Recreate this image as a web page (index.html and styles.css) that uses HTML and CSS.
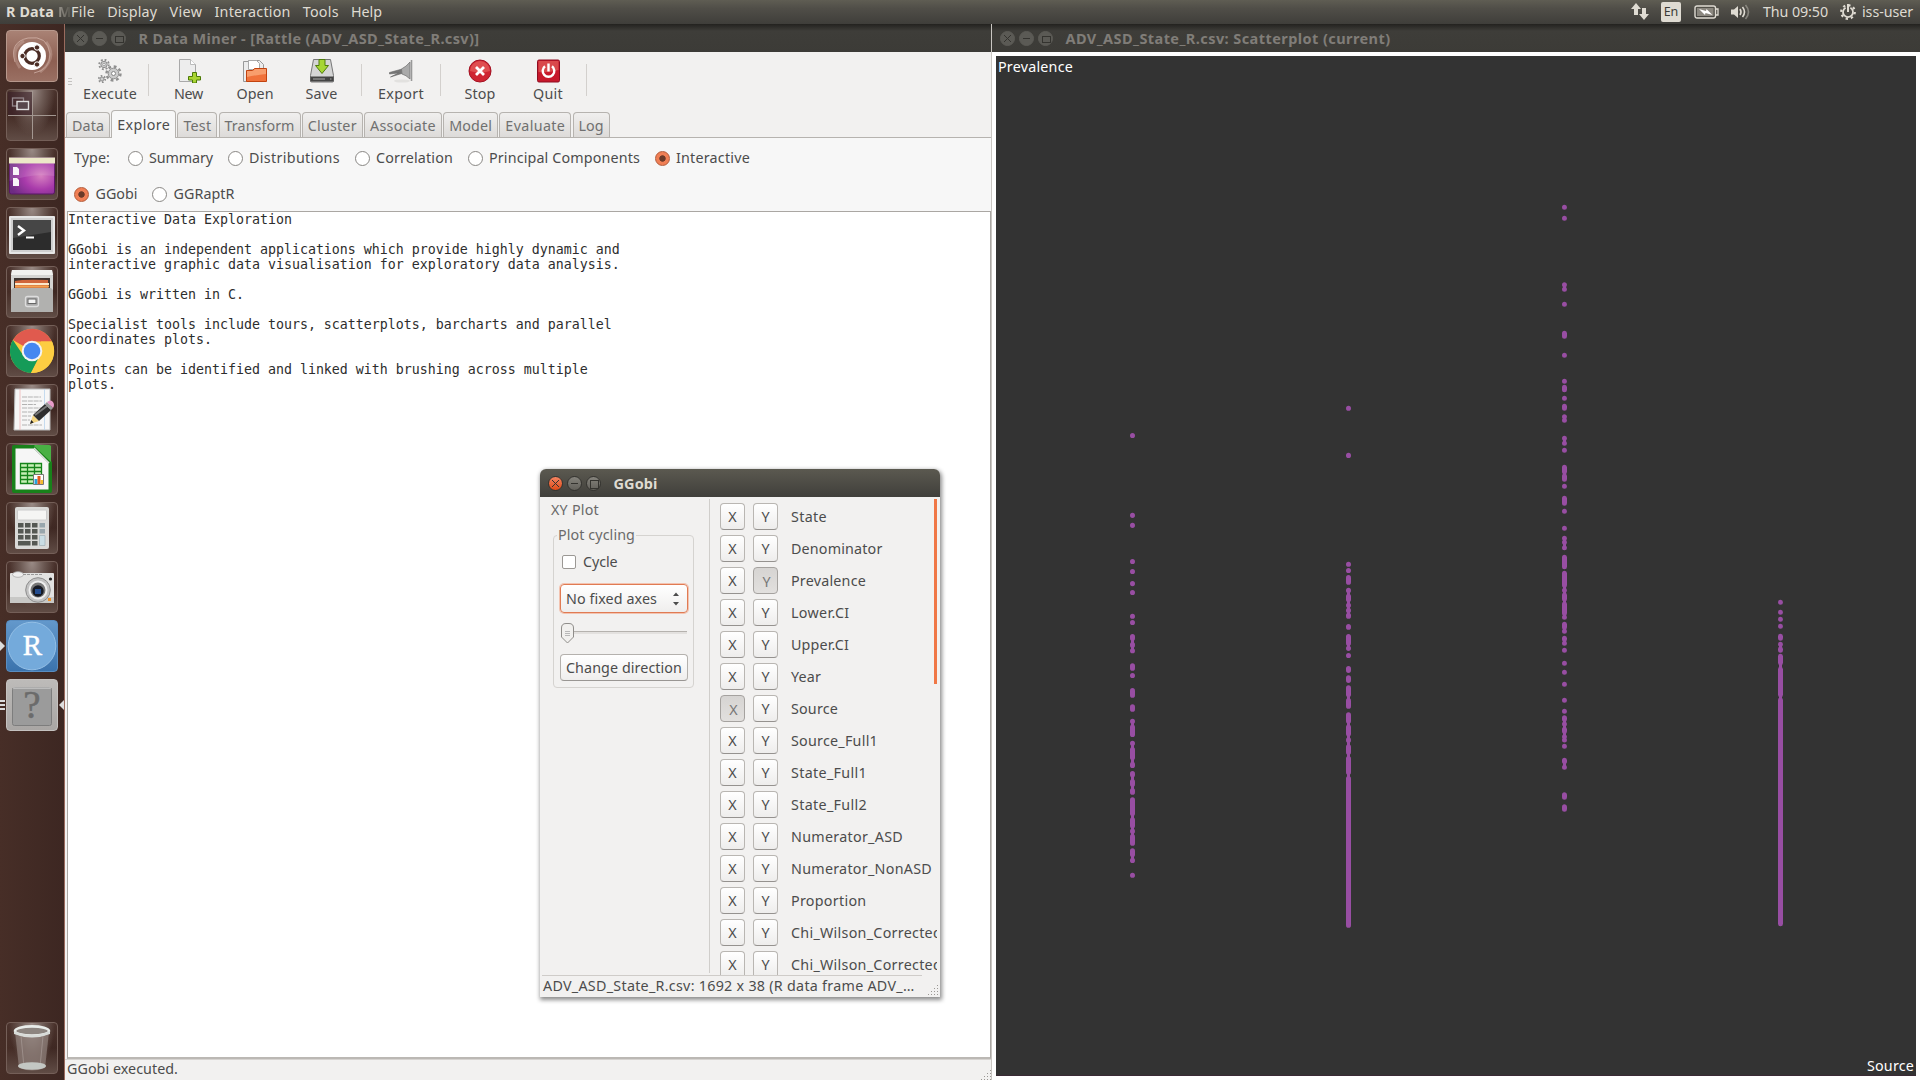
FILE: index.html
```html
<!DOCTYPE html>
<html lang="en">
<head>
<meta charset="utf-8">
<title>R Data Miner</title>
<link rel="stylesheet" href="styles.css">
</head>
<body>
<header class="panel">
  <span class="app-name"><b data-w="48">R Data</b><i>M</i></span>
  <nav class="menu"><span data-w="24">File</span><span data-w="50">Display</span><span data-w="33">View</span><span data-w="76">Interaction</span><span data-w="36">Tools</span><span data-w="31">Help</span></nav>
  <div class="tray">
    <svg class="t-net" width="20" height="18" viewBox="0 0 20 18"><path fill="#dfdbd2" d="M6 0l5 6H8v6H4V6H1zM14 17l-5-6h3V5h4v6h3z"/></svg>
    <span class="lang">En</span>
    <svg class="t-bat" width="25" height="14" viewBox="0 0 25 14"><rect x="1" y="1" width="20.500" height="12" rx="2" fill="none" stroke="#dfdbd2" stroke-width="1.400"/><rect x="3" y="3" width="16.500" height="8" fill="#8b877f"/><path d="M22 4h2v6h-2" fill="none" stroke="#dfdbd2" stroke-width="1.300"/><path fill="#fff" d="M5 4l7 2 .5-2 6 6-7-2-.5 2z"/></svg>
    <svg class="t-vol" width="21" height="16" viewBox="0 0 21 16"><path fill="#dfdbd2" d="M1 5.500h3L8 2v12l-4-3.500H1z"/><g fill="none" stroke="#dfdbd2" stroke-width="1.600"><path d="M10 5q2 3 0 6"/><path d="M12.500 3q4 5 0 10"/><path d="M15.500 1q6 7 0 14" opacity=".4"/></g></svg>
    <span class="clock" data-w="65">Thu 09:50</span>
    <svg class="t-gear" width="16" height="16" viewBox="0 0 16 16"><g fill="none" stroke="#dfdbd2"><circle cx="8" cy="8" r="6.800" stroke-width="2.200" stroke-dasharray="2.300 3.040" /><path d="M5.600 3.700a5 5 0 1 0 4.800 0" stroke-width="1.800"/><path d="M8 0v8" stroke-width="2"/></g></svg>
    <span class="user" data-w="51">iss-user</span>
  </div>
</header>

<div class="workspace">
<aside class="launcher">
  <div class="tile dash"><svg viewBox="0 0 52 52"><g fill="none" stroke="#e9cfc6" opacity=".55"><path d="M9 32Q3 12 22 8Q42 5 44 24Q44 40 28 43"/><path d="M14 38Q2 20 18 11" stroke-width="3" opacity=".5"/><path d="M40 12Q52 28 34 42" stroke-width="3" opacity=".5"/></g><circle cx="26" cy="26" r="14" fill="#fff"/><circle cx="26" cy="26" r="7.300" fill="none" stroke="#4a2c24" stroke-width="3.200"/><g fill="#4a2c24" stroke="#fff"><circle cx="16.500" cy="26" r="2.700"/><circle cx="31" cy="17.500" r="2.700"/><circle cx="31" cy="34.500" r="2.700"/></g></svg></div>
  <div class="tile"><svg viewBox="0 0 52 52"><rect x="2" y="3" width="24" height="23" fill="#3a2028" opacity=".6"/><path d="M26.500 2v48M2 26.500h48" stroke="#a39791"/><rect x="6.500" y="9" width="11" height="8" fill="none" stroke="#92868a" stroke-width="1.300"/><rect x="11" y="12.500" width="11.500" height="8" fill="#57474c" stroke="#ddd" stroke-width="1.400"/></svg></div>
  <div class="tile"><svg viewBox="0 0 52 52"><defs><radialGradient id="pu" cx=".7" cy=".5" r=".75"><stop offset="0" stop-color="#d67fc0"/><stop offset=".5" stop-color="#a93bab"/><stop offset="1" stop-color="#6d2b83"/></radialGradient></defs><rect x="3.500" y="10" width="45" height="36" rx="2" fill="url(#pu)" stroke="#5b1669"/><path d="M3 9.500h46v6H3z" fill="#ece8c8"/><path d="M3.500 15.500h45V28Q26 25 3.500 33z" fill="#fff" opacity=".12"/><path d="M7 19h4l2 2v6H7zM7 30h4l2 2v6H7z" fill="#f8f4f8"/></svg></div>
  <div class="tile"><svg viewBox="0 0 52 52"><rect x="3" y="9" width="46" height="38" rx="1" fill="#e6e6e6"/><rect x="5" y="11" width="42" height="34" fill="#cfcfcf"/><rect x="7" y="13" width="38" height="30" fill="#2c2c2c"/><path d="M7 13h38v12L7 31z" fill="#464646"/><path d="M12 19l6 4.500-6 4.500" fill="none" stroke="#fff" stroke-width="2.400"/><path d="M20 30.500h8" stroke="#fff" stroke-width="2"/></svg></div>
  <div class="tile"><svg viewBox="0 0 52 52"><path d="M6 4h40l1 6v36H5V10z" fill="#d4d4d2"/><path d="M6 4h40l1 5H5z" fill="#f1f1ef"/><path d="M8 12h36v12H8z" fill="#3c3330"/><path d="M9 15q8-2 33-1v9H9z" fill="#d0653a"/><path d="M9 18h34" stroke="#fbe8cb" stroke-width="2"/><path d="M9 20.500h34" stroke="#f2a14e" stroke-width="2"/><path d="M7 22h38l2 2v22H5V24z" fill="#b1b1af"/><rect x="19.500" y="30.500" width="13" height="10" rx="2" fill="#aaa" stroke="#ddd" stroke-width="1.300"/><rect x="22" y="33" width="8" height="4.500" fill="#f4f4f4" stroke="#666"/></svg></div>
  <div class="tile"><svg viewBox="0 0 52 52"><circle cx="26" cy="26" r="22" fill="#fbc93d"/><path d="M26 26L6.900 15A22 22 0 0 1 46 16.500H26z" fill="#e05a4e"/><path d="M6.900 15A22 22 0 0 0 25 48l9.500-17L26 26 17 30z" fill="#159b58"/><path d="M25 48l9-18 1-13.500h11A22 22 0 0 1 25 48z" fill="#fdcd42"/><circle cx="26" cy="26" r="10.300" fill="#f3f3f3"/><circle cx="26" cy="26" r="8.300" fill="#4587f0"/></svg></div>
  <div class="tile"><svg viewBox="0 0 52 52"><path d="M9 5h35v41H8z" fill="#f6f6f6" stroke="#b9b9b9"/><path d="M14 5v41" stroke="#f0b6b6" stroke-width=".8"/><path d="M38.500 5v41" stroke="#b9d4ee" stroke-width=".8"/><path d="M16 13h19M16 17h20M16 20.500h14M16 24h20M16 28h17M16 32h9M16 36h8M16 41h20" stroke="#b2b2b2" stroke-dasharray="5 .8"/><path d="M24 40l3-9 6 6z" fill="#f3d480"/><path d="M27 31l12-11 6 6-12 11z" fill="#2e2e2e"/><path d="M29 31l12-9" stroke="#777" stroke-width="2"/><path d="M39 20l2-2 6 6-2 2z" fill="#999"/><path d="M41 18q4-3 6 0t0 6z" fill="#e69bc8"/><path d="M24 40l1.200-4 2.500 2.500z" fill="#222"/></svg></div>
  <div class="tile"><svg viewBox="0 0 52 52"><path d="M8 2h21l17 17v29q0 2-2 2H8q-2 0-2-2V4q0-2 2-2z" fill="#18811a"/><path d="M9.500 5.500h18L42.500 20v26.500h-33z" fill="#f6f6f6"/><path d="M28 3l17 16V3q-1-1-2-1H29z" fill="#49b044"/><path d="M28 5l15 15" stroke="#ddd" stroke-width="1.600"/><g fill="#c6efb5" stroke="#15841a" stroke-width="1.300"><path d="M14.500 20.500h21v20h-21z"/><path fill="none" d="M14.500 24.500h21M14.500 28.500h21M14.500 32.500h21M14.500 36.500h21M21.500 20.500v20M28.500 20.500v20"/></g><path d="M27.500 31.500h10v10h-10z" fill="#fff" stroke="#777"/><path d="M28.500 36h3v5h-3z" fill="#27a3dd"/><path d="M31.500 33h3v8h-3z" fill="#e35a1d"/><path d="M34.500 37h2.500v4h-2.500z" fill="#f3bc2c"/></svg></div>
  <div class="tile"><svg viewBox="0 0 52 52"><rect x="9" y="5" width="34" height="42" rx="2" fill="#d9d9d7"/><rect x="11.500" y="8" width="29" height="10" rx="1" fill="#f5f5f4" stroke="#ccc"/><g fill="#555853"><path d="M12 21h5.500v4.500H12zM19 21h5.500v4.500H19zM26 21h5.500v4.500H26zM12 27h5.500v4.500H12zM19 27h5.500v4.500H19zM26 27h5.500v4.500H26zM12 33h5.500v4.500H12zM19 33h5.500v4.500H19zM26 33h5.500v4.500H26zM12 39h12.500v4.500H12zM26 39h5.500v4.500H26z"/></g><path d="M33.500 21H39v4.500h-5.500zM33.500 27H39v4.500h-5.500z" fill="#98a6ac"/><path d="M33.500 33.500H39v10h-5.500z" fill="#c9dde4" stroke="#a4b4ba" stroke-width=".8"/></svg></div>
  <div class="tile"><svg viewBox="0 0 52 52"><path d="M5 12h42q1 0 1 1v28q0 1-1 1H5q-1 0-1-1V13q0-1 1-1z" fill="#e2e2e1"/><path d="M4 36h44v6H4z" fill="#c8c8c6"/><ellipse cx="12" cy="13.500" rx="5.500" ry="2.800" fill="#eee" stroke="#aaa" stroke-width=".8"/><path d="M17 13.500h19" stroke="#999" stroke-dasharray="3 1"/><circle cx="32" cy="29" r="12.300" fill="#c2c2c2" stroke="#8d8d8d"/><circle cx="32" cy="29" r="9.500" fill="#eee"/><circle cx="32" cy="29" r="7.500" fill="#777"/><circle cx="32" cy="30" r="5.700" fill="#161a24"/><path d="M29 28h6v5h-6z" fill="#234c8f"/><circle cx="44.500" cy="18" r="1.600" fill="#222"/><path d="M42 37h3v3h-3z" fill="#ef9128"/></svg></div>
  <div class="tile rstudio"><i class="mark left"></i><svg viewBox="0 0 52 52"><circle cx="26" cy="26" r="23.800" fill="#74aadb" stroke="#93bfe6"/><text x="26.500" y="34.500" text-anchor="middle">R</text></svg></div>
  <div class="tile unknown"><i class="bars"></i><svg viewBox="0 0 52 52"><rect x="6.500" y="8.500" width="39" height="38" rx="2" fill="#9b9b9b" stroke="#7d7d7d"/><path d="M7 9h38" stroke="#ddd"/><text x="26" y="39" text-anchor="middle">?</text></svg><i class="mark right"></i></div>
  <div class="tile trash"><svg viewBox="0 0 52 52"><path d="M9 10l4 36q13 5 26 0l4-36z" fill="#9b8d88" opacity=".6"/><path d="M15 14l3 31M37 14l-3 31" stroke="#b5aaa6" opacity=".5"/><ellipse cx="26" cy="44" rx="14" ry="3.800" fill="#c3c7c3"/><ellipse cx="26" cy="9" rx="17" ry="4.600" fill="#8d8580" stroke="#e9ece9" stroke-width="2.600"/><path d="M8 9v3q18 7 36 0V9q-18 8-36 0z" fill="#d8dbd8"/></svg></div>
</aside>

<main class="rattle">
  <div class="titlebar inactive"><span class="wb x"></span><span class="wb m"></span><span class="wb r"></span><b data-w="341">R Data Miner - [Rattle (ADV_ASD_State_R.csv)]</b></div>
  <div class="toolbar">
    <i class="handle"></i>
    <div class="tool w-exe"><svg viewBox="0 0 24 24"><g fill="none" stroke="#8f8f8f"><circle cx="6" cy="5.500" r="4.800" stroke-dasharray="1.900 1.870" stroke-width="1.800"/><circle cx="6" cy="5.500" r="3.200" fill="#c9c9c9"/><circle cx="15.500" cy="14.500" r="7" stroke-width="2.400" stroke-dasharray="2.800 2.700"/><circle cx="15.500" cy="14.500" r="5.300" fill="#cbcbcb"/><circle cx="4" cy="20" r="3.200" stroke-dasharray="1.600 1.750" stroke-width="1.800"/><circle cx="4" cy="20" r="2" fill="#ccc"/></g><circle cx="6" cy="5.500" r="1.200" fill="#fff" stroke="#888" stroke-width=".7"/><circle cx="15.500" cy="14.500" r="2" fill="#fff" stroke="#888"/></svg><span data-w="54">Execute</span></div>
    <i class="sep"></i>
    <div class="tool w-new"><svg viewBox="0 0 24 24"><path d="M2.500.5h11l5 5v17h-16z" fill="#ededed" stroke="#a9a9a9"/><path d="M13.500.5v5h5" fill="#fff" stroke="#bbb"/><path d="M15.500 13.500h4v4h4v3.500h-4v3h-4v-3h-4v-3.500h4z" fill="#a9d532" stroke="#4d7a07"/></svg><span data-w="29">New</span></div>
    <div class="tool w-open"><svg viewBox="0 0 24 24"><path d="M.5 2.500h5v-1h11l4 4v17H.5z" fill="#ececec" stroke="#999"/><path d="M5.500 1.500h8l3 3v6h-11z" fill="#fff" stroke="#aaa"/><path d="M3.500 11.500h6l2-2h12v13h-20z" fill="#f0723b" stroke="#c2430f"/><path d="M4 12h6l2-2h11v5q-9 1-19 3z" fill="#fbb083" opacity=".7"/></svg><span data-w="37">Open</span></div>
    <div class="tool w-save"><svg viewBox="0 0 24 24"><path d="M3.500.5h17l3 16v5.500q0 1-1 1h-21q-1 0-1-1v-5.500z" fill="#d5d5d5" stroke="#777"/><path d="M.5 17.500h23v5H.5z" fill="#444"/><path d="M3 20h12M20 20h1.500" stroke="#aaa"/><path d="M9 .5h6v6h3.500L12 14.500 5.500 6.500H9z" fill="#a6d634" stroke="#4e7c0a"/></svg><span data-w="32">Save</span></div>
    <i class="sep"></i>
    <div class="tool w-export"><svg viewBox="0 0 24 24"><ellipse cx="13" cy="22" rx="8" ry="1.600" fill="#e2e1df"/><path d="M.5 13.500l9-2.500 3.500-1 2.500 4-4.500 1-9.500 3 8-4-9 1z" fill="#777" stroke="#666" stroke-width=".6"/><path d="M12.500 10q5-2.500 8.500-7v17q-4-4-8-5z" fill="#aaa" stroke="#777" stroke-width=".8"/><path d="M22.500 1v21" stroke="#999" stroke-width="1.600"/></svg><span data-w="46">Export</span></div>
    <i class="sep"></i>
    <div class="tool w-stop"><svg viewBox="0 0 24 24"><circle cx="12" cy="12" r="11" fill="#cf2532" stroke="#a41223"/><path d="M2 12a10 10 0 0 1 20 0q-10 3-20 0z" fill="#ea6a64" opacity=".6"/><path d="M8 8l8 8m0-8l-8 8" stroke="#fff" stroke-width="2.800"/></svg><span data-w="31">Stop</span></div>
    <div class="tool w-quit"><svg viewBox="0 0 24 24"><rect x="1.500" y="1" width="22" height="22" rx="1.500" fill="#c7182b" stroke="#8f0c20"/><path d="M2.500 2h20v9q-10 3-20 2z" fill="#e56a62" opacity=".6"/><path d="M9 7.300a5.800 5.800 0 1 0 7 0" fill="none" stroke="#fff" stroke-width="2.400"/><path d="M12.500 4.500v8" stroke="#fff" stroke-width="2.400"/></svg><span data-w="30">Quit</span></div>
    <i class="sep"></i>
  </div>
  <div class="tabs"><span><em data-w="32">Data</em></span><span class="on"><em data-w="53">Explore</em></span><span><em data-w="28">Test</em></span><span><em data-w="70">Transform</em></span><span><em data-w="49">Cluster</em></span><span><em data-w="66">Associate</em></span><span><em data-w="43">Model</em></span><span><em data-w="60">Evaluate</em></span><span><em data-w="25">Log</em></span></div>
  <div class="options">
    <div class="row"><span class="type" data-w="36">Type:</span><label><i></i><span data-w="64">Summary</span></label><label><i></i><span data-w="91">Distributions</span></label><label><i></i><span data-w="77">Correlation</span></label><label><i></i><span data-w="151">Principal Components</span></label><label class="on"><i></i><span data-w="74">Interactive</span></label></div>
    <div class="row engine"><label class="on"><i></i><span data-w="42">GGobi</span></label><label><i></i><span data-w="61">GGRaptR</span></label></div>
  </div>
<pre class="textview">Interactive Data Exploration

GGobi is an independent applications which provide highly dynamic and
interactive graphic data visualisation for exploratory data analysis.

GGobi is written in C.

Specialist tools include tours, scatterplots, barcharts and parallel
coordinates plots.

Points can be identified and linked with brushing across multiple
plots.</pre>
  <div class="status"><span data-w="111">GGobi executed.</span><i class="grip"></i></div>
</main>

<section class="scatter">
  <div class="titlebar inactive"><span class="wb x"></span><span class="wb m"></span><span class="wb r"></span><b data-w="325">ADV_ASD_State_R.csv: Scatterplot (current)</b></div>
  <div class="plot">
    <span class="ylab" data-w="75">Prevalence</span>
    <svg class="points" viewBox="996 56 920 1020">
      <g transform="translate(1132.500 400) scale(.33333 .34438)"><path class="d" d="M0 103v0M0 335v0M0 364v0M0 469v0M0 498v0M0 533v0M0 559v0M0 628v0M0 646v0M0 687V692M0 710V712M0 728v0M0 772V779M0 800v0M0 844V857M0 891V898M0 933v0M0 950V971M0 997v0M0 1015V1038M0 1058V1061M0 1085V1088M0 1108V1116M0 1134V1139M0 1161V1201M0 1219V1236M0 1252v0M0 1268V1287M0 1309V1320M0 1337v0M0 1380v0"/><path class="n" d="M0 687V728M0 933V971M0 997V1061M0 1085V1139M0 1161V1287M0 1309V1337"/></g>
      <g transform="translate(1348.500 400) scale(.33333 .34438)"><path class="d" d="M0 24v0M0 161v0M0 477v0M0 495v0M0 516V529M0 553v0M0 570V579M0 596v0M0 611v0M0 625V628M0 658V660M0 687V706M0 721v0M0 742v0M0 780V785M0 807V814M0 836V855M0 873V889M0 914V932M0 950V969M0 987V988M0 1007V1023M0 1041V1081M0 1099V1525"/><path class="n" d="M0 553V628M0 687V721M0 836V889M0 914V1500"/></g>
      <g transform="translate(1564.500 190) scale(.33333)"><path class="d" d="M0 52v0M0 85v0M0 284v0M0 298v0M0 343v0M0 430V439M0 496v0M0 574v0M0 592V599M0 625v0M0 649V655M0 680v0M0 691v0M0 745v0M0 760v0M0 781v0M0 832V845M0 858V868M0 889v0M0 925V940M0 964v0"/><path class="n" d="M0 284V298M0 680V691M0 745V760M0 832V868"/></g>
      <g transform="translate(1564.500 500) scale(.33333)"><path class="d" d="M0 85v0M0 115v0M0 127v0M0 143v0M0 172V200M0 220V256M0 271v0M0 285V297M0 312V340M0 352v0M0 373V382M0 394v0M0 415V418M0 430v0M0 451v0M0 490v0M0 517v0M0 553v0M0 601v0M0 634v0M0 653V658M0 672v0M0 688V694M0 710v0M0 720v0M0 739v0M0 781V785M0 802v0M0 884V892M0 920V928"/><path class="n" d="M0 115V143M0 220V352M0 373V394M0 415V430M0 653V720M0 783V802"/></g>
      <g transform="translate(1780.500 580) scale(.33333)"><path class="d" d="M0 67v0M0 97v0M0 118v0M0 139v0M0 169V175M0 193v0M0 207V211M0 229V248M0 268V344M0 360V1031"/><path class="n" d="M0 193V211M0 229V400"/></g>
    </svg>
    <span class="xlab" data-w="47">Source</span>
  </div>
</section>
</div>

<div class="ggobi">
  <div class="titlebar"><span class="wb x"></span><span class="wb m"></span><span class="wb r"></span><b data-w="44">GGobi</b></div>
  <div class="gbody">
    <div class="gleft">
      <span class="mode" data-w="48">XY Plot</span>
      <div class="frame">
        <span class="legend"><em data-w="77">Plot cycling</em></span>
        <label class="check"><i></i><span data-w="34.500">Cycle</span></label>
        <div class="combo"><span data-w="91">No fixed axes</span><svg width="8" height="14" viewBox="0 0 8 14"><path d="M1 4l3-3.500L7 4zM1 10l3 3.500L7 10z" fill="#4c4c4c"/></svg></div>
        <div class="slider"><svg width="13" height="21" viewBox="0 0 13 21"><path d="M.5 5q0-4.500 4.500-4.500h3q4.500 0 4.500 4.500v9l-6 6-6-6z" fill="#f1f0ee" stroke="#8f8d8a"/><path d="M4 8.500h5M4 10.500h5M4 12.500h5" stroke="#aaa" stroke-width=".8"/></svg></div>
        <div class="gbtn"><span data-w="116">Change direction</span></div>
      </div>
    </div>
    <div class="vars">
      <div><button>X</button><button>Y</button><span data-w="36">State</span></div>
      <div><button>X</button><button>Y</button><span data-w="91.500">Denominator</span></div>
      <div><button>X</button><button class="down">Y</button><span data-w="75">Prevalence</span></div>
      <div><button>X</button><button>Y</button><span data-w="58.500">Lower.CI</span></div>
      <div><button>X</button><button>Y</button><span data-w="58">Upper.CI</span></div>
      <div><button>X</button><button>Y</button><span data-w="30">Year</span></div>
      <div><button class="down">X</button><button>Y</button><span data-w="47">Source</span></div>
      <div><button>X</button><button>Y</button><span data-w="87">Source_Full1</span></div>
      <div><button>X</button><button>Y</button><span data-w="76">State_Full1</span></div>
      <div><button>X</button><button>Y</button><span data-w="76">State_Full2</span></div>
      <div><button>X</button><button>Y</button><span data-w="112">Numerator_ASD</span></div>
      <div><button>X</button><button>Y</button><span data-w="141">Numerator_NonASD</span></div>
      <div><button>X</button><button>Y</button><span data-w="75.500">Proportion</span></div>
      <div><button>X</button><button>Y</button><span data-w="151">Chi_Wilson_Corrected</span></div>
      <div><button>X</button><button>Y</button><span data-w="151">Chi_Wilson_Corrected</span></div>
    </div>
    <i class="scroll"></i>
  </div>
  <div class="gstatus"><span data-w="371.500">ADV_ASD_State_R.csv: 1692 x 38 (R data frame ADV_…</span><i class="grip"></i></div>
</div>
<script src="labels.js"></script>
</body>
</html>
```
FILE: styles.css
```css
* { box-sizing: border-box; }
body { margin: 0; width: 1920px; height: 1080px; overflow: hidden; background: #3c3b37; font: 14.3px/18px "Noto Sans", "Open Sans", sans-serif; color: #4c4c4c; position: relative; }
i, em { font-style: normal; }
svg { display: block; }
[data-w] { display: block; flex: none; white-space: nowrap; }

.panel { height: 24px; display: flex; align-items: center; background: linear-gradient(#5f5d53, #504e48 35%, #3f3e3a); color: #dfdbd2; }
.app-name { width: 71px; padding-left: 6px; display: flex; gap: 4px; overflow: hidden; }
.app-name i { font-weight: bold; width: 13px; overflow: hidden; background: linear-gradient(90deg, #9a968e, #55534c); background-clip: text; color: transparent; }
.menu { display: flex; gap: 12.200px; flex: 1; }
.tray { display: flex; align-items: center; width: 290px; }
.lang { width: 20px; height: 20px; margin-left: 11px; border-radius: 2px; background: #dfdbd2; color: #3c3b37; font-size: 12.500px; line-height: 20px; text-align: center; }
.t-bat { margin-left: 13px; }
.t-vol { margin-left: 11px; }
.clock { margin-left: 12px; }
.t-gear { margin-left: 12px; }
.user { margin-left: 6px; }

.workspace { display: flex; height: 1056px; }
.launcher { width: 65px; padding: 6px 0 6px 6px; display: flex; flex-direction: column; gap: 7px; background: linear-gradient(90deg, #472e27, #3d2722); border-right: 1px solid #9a6b5e; }
.tile { flex: none; width: 52px; height: 52px; border-radius: 4px; position: relative; background: radial-gradient(ellipse at 50% 0, #9a8b86 0, #6a5751 35%, transparent 65%), linear-gradient(#4a322c, #40291f00 50%, #604c45); border: 1px solid #745f58; }
.tile svg { width: 52px; height: 52px; margin: -1px; }
.dash { background: linear-gradient(#a98275, #8d5f52 60%, #9a7063); border-color: #b7988c; }
.rstudio { background: linear-gradient(#6398cb, #3b73ad); border-color: #5a8dc0; }
.rstudio text { font: 29px "Liberation Serif", serif; fill: #fff; stroke: #fff; stroke-width: .4px; }
.unknown { background: linear-gradient(#bdbbb9, #a9a6a4); border-color: #c5c2c0; }
.unknown text { font: 39px "Liberation Serif", serif; fill: #6b6b6b; stroke: #6b6b6b; stroke-width: .5px; }
.trash { margin-top: auto; }
.mark { position: absolute; top: 20px; border: 5px solid transparent; }
.mark.left { left: -7px; border-left-color: #ddd; border-right: 0; }
.mark.right { right: -7px; border-right-color: #ddd; border-left: 0; }
.bars { position: absolute; left: -7px; top: 20px; width: 5px; height: 10px; background: repeating-linear-gradient(#ddd 0 2px, transparent 2px 4px); }

.titlebar { height: 28px; display: flex; align-items: center; gap: 4px; padding-left: 8px; background: linear-gradient(#5b5950, #403f3b); color: #dfdbd2; font-size: 14.500px; }
.titlebar b { margin-left: 8.500px; }
.titlebar.inactive { background: linear-gradient(#23221f, #3e3d39 25%, #3c3b37); color: #807d78; }
.wb { width: 15px; height: 15px; border-radius: 50%; background: linear-gradient(#85837c, #62605a); border: 1px solid #34332f; position: relative; }
.inactive .wb { background: #5b5a55; border-color: #5b5a55; }
.wb::after { content: ""; position: absolute; }
.m::after { left: 3px; top: 6px; width: 7px; height: 1px; background: #34332f; }
.r::after { left: 3px; top: 3px; width: 7px; height: 7px; border: 1px solid #34332f; }
.inactive .r::after { top: 4px; height: 5px; }
.x::after { left: 3px; top: 3px; width: 7px; height: 7px; background: linear-gradient(45deg, transparent 45%, #34332f 45% 56%, transparent 56%), linear-gradient(-45deg, transparent 45%, #34332f 45% 56%, transparent 56%); }

.rattle { width: 927px; display: flex; flex-direction: column; background: #f2f1f0; border-right: 1px solid #c9c6c2; }
.rattle .titlebar { flex: none; }
.toolbar { height: 58px; flex: none; display: flex; align-items: flex-start; padding: 6px 0 0 3px; }
.handle { width: 4px; height: 9px; margin-top: 20px; background: repeating-linear-gradient(#c4c2c0 0 1px, transparent 1px 3px); }
.tool { flex: none; display: flex; flex-direction: column; align-items: center; gap: 2px; padding-top: 1px; line-height: 18px; }
.tool svg { width: 24px; height: 24px; }
.w-exe { width: 76px; }
.w-new { width: 79px; }
.w-open { width: 54px; }
.w-save { width: 79px; }
.w-export { width: 78px; }
.w-stop { width: 78px; }
.w-quit { width: 58px; margin-right: 9px; }
.sep { width: 1px; height: 32px; margin-top: 6px; background: #d3d0cd; flex: none; }

.tabs { height: 28px; flex: none; display: flex; align-items: flex-end; gap: 1.200px; padding-left: 1px; border-bottom: 1px solid #b6b3af; color: #707070; }
.tabs span { height: 25px; padding: 3.500px 5px 0; border: 1px solid #b6b3af; border-bottom: 0; border-radius: 4px 4px 0 0; background: linear-gradient(#f0efee, #dddbd9); }
.tabs .on { height: 28px; padding-top: 5px; margin-bottom: -1px; background: #f7f7f7; color: #4c4c4c; }
.options { flex: none; height: 73px; padding: 11px 8px 0; background: #f7f7f7; }
.row { display: flex; align-items: center; height: 18px; margin-bottom: 18px; }
.row label { display: flex; align-items: center; gap: 6.500px; margin-right: 14.500px; }
.engine { padding-left: 1px; }
.type { margin: 0 17.500px 0 1px; }
.row label i { width: 15px; height: 15px; border-radius: 50%; border: 1px solid #898784; background: #fff; }
.row .on i { border-color: #b35a38; background: radial-gradient(circle, #6b3a28 0 2.800px, #f07f55 3.600px); }
.textview { flex: 1; margin: 0 0 0 2px; border: 1px solid #aaa7a3; border-bottom: 2px solid #bbb8b4; background: #fff; color: #2d2d2d; padding: 0; font: 13.290px/15px "DejaVu Sans Mono", monospace; }
.status { flex: none; height: 21px; padding: 0 0 0 2px; border-top: 1px solid #d6d3d0; display: flex; justify-content: space-between; }
.grip { width: 11px; height: 11px; margin-top: 9px; background: radial-gradient(circle, #9b9894 .7px, transparent 1px) 0 0/3px 3px; clip-path: polygon(100% 0, 100% 100%, 0 100%); }

.scatter { width: 928px; display: flex; flex-direction: column; background: #fff; }
.plot { width: 920px; height: 1020px; margin: 4px 0 0 4px; background: #333; color: #fff; position: relative; border-bottom: 1px solid #3a2a35; }
.points { width: 920px; height: 1020px; }
.d { stroke: #984ea3; stroke-width: 15; stroke-linecap: round; fill: none; }
.n { stroke: #984ea3; stroke-width: 9; fill: none; }
.ylab { position: absolute; left: 2px; top: 2px; }
.xlab { position: absolute; right: 2px; bottom: 0; }

.ggobi { position: absolute; left: 540px; top: 469px; width: 400px; height: 528px; display: flex; flex-direction: column; background: #f2f1f0; border-radius: 6px 6px 0 0; box-shadow: 1px 2px 4px 1px rgba(0,0,0,.45); }
.ggobi .titlebar { border-radius: 6px 6px 0 0; flex: none; }
.ggobi .x { background: linear-gradient(#f58462, #df4a16); }
.gbody { height: 478px; flex: none; display: flex; overflow: hidden; padding-top: 2px; }
.gleft { width: 170px; height: 474px; border-right: 1px solid #d0cecb; padding: 2px 0 0 11px; flex: none; }
.mode, .legend { color: #6a6a6a; }
.frame { width: 141px; height: 153px; margin: 16px 0 0 2px; border: 1px solid #d5d3d0; border-radius: 4px; padding: 0 5px 0 6px; display: flex; flex-direction: column; }
.legend { align-self: flex-start; margin: -10px 0 0 -3px; padding: 0 1px; background: #f2f1f0; height: 18px; }
.check { display: flex; align-items: center; gap: 7px; margin: 9px 0 0 2px; height: 18px; }
.check i { width: 14px; height: 14px; border: 1px solid #9b9894; border-radius: 2px; background: #fff; }
.combo, .gbtn { display: flex; align-items: center; border: 1px solid #b4b1ad; border-bottom-color: #999693; border-radius: 4px; background: linear-gradient(#fff, #efeeed); }
.combo { height: 29px; margin: 13px 0 0; padding: 0 7px 0 5px; justify-content: space-between; border: 1px solid #e07b53; box-shadow: 0 0 0 1px #f3c3b0; }
.slider { height: 21px; margin: 10px 0 10px; padding-left: 1px; background: linear-gradient(#b5b2ae 0 1px, #e3e1df 1px) 3px 8px/124px 3px no-repeat; }
.gbtn { height: 27px; justify-content: center; }
.vars { flex: none; width: 227px; margin-right: -3px; padding: 4px 0 0 10px; overflow: hidden; }
.vars div { display: flex; align-items: center; height: 27px; margin-bottom: 5px; }
.vars button { flex: none; width: 25px; height: 27px; margin-right: 8px; padding: 0; border: 1px solid #b9b6b2; border-bottom-color: #95928f; border-radius: 4px; background: linear-gradient(#fff, #eeedec); color: #4c4c4c; font: inherit; }
.vars span { margin-left: 5px; }
.vars .down { background: linear-gradient(#d6d4d2, #e2e0de); color: #777; border-color: #a5a29f; padding: 2px 0 0 2px; }
.scroll { width: 3px; height: 185px; margin: 0 3px 0 0; background: #f07746; flex: none; }
.gstatus { height: 22px; margin: 0 2px; display: flex; justify-content: space-between; padding: 2px 0 0 1px; background: linear-gradient(#cfccc9, #cfccc9) 0 0/380px 1px no-repeat; }
.gstatus .grip { margin-top: 7px; }
```
FILE: labels.js
```js
// Spreads each label's letters over the width given in data-w.
document.querySelectorAll('[data-w]').forEach(el => {
  const target = parseFloat(el.dataset.w);
  const range = document.createRange();
  range.selectNodeContents(el);
  const natural = range.getBoundingClientRect().width;
  el.style.letterSpacing = (target - natural) / el.textContent.length + 'px';
  el.style.width = target + 'px';
});
```
